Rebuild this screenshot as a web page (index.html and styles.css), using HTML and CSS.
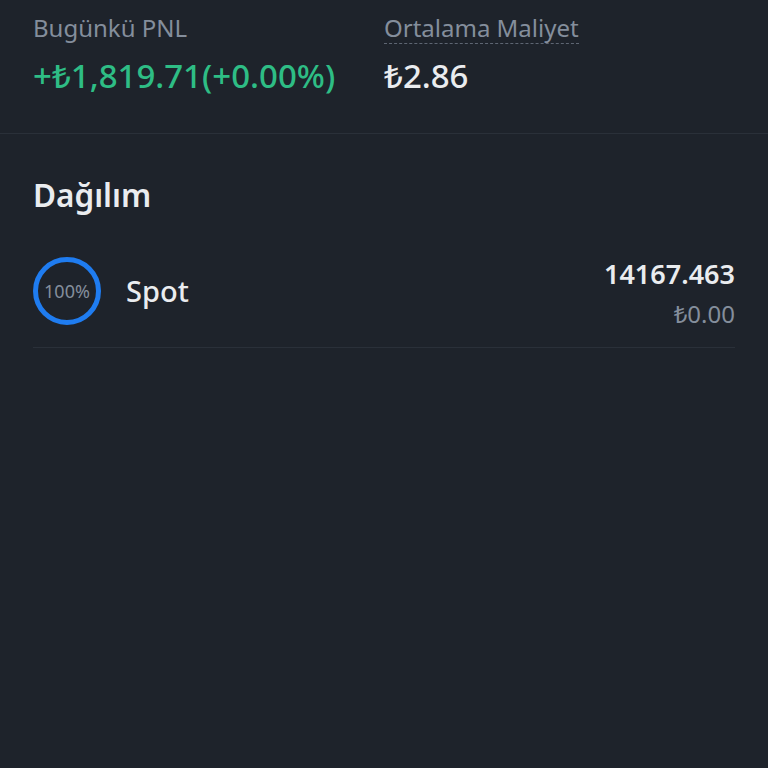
FILE: index.html
```html
<!DOCTYPE html>
<html lang="tr">
<head>
    <meta charset="UTF-8">
    <meta name="viewport" content="width=device-width, initial-scale=1.0">
    <title>Varlık Detayı</title>
    <link rel="stylesheet" href="styles.css">
</head>
<body>
    <div class="ozet">
        <div class="kolon">
            <div class="etiket">Bugünkü PNL</div>
            <div class="deger yesil">+₺1,819.71(+0.00%)</div>
        </div>
        <div class="kolon">
            <div class="etiket"><span class="noktali">Ortalama Maliyet</span></div>
            <div class="deger">₺2.86</div>
        </div>
    </div>

    <div class="dagilim">
        <h2>Dağılım</h2>
        <div class="satir">
            <div class="halka">
                <svg width="68" height="68" viewBox="0 0 68 68">
                    <circle cx="34" cy="34" r="31.5" fill="none" stroke="#1f7cf0" stroke-width="5"/>
                </svg>
                <span>100%</span>
            </div>
            <div class="ad">Spot</div>
            <div class="tutar">
                <div class="miktar">14167.463</div>
                <div class="karsilik">₺0.00</div>
            </div>
        </div>
    </div>
</body>
</html>
```

FILE: styles.css
```css
/* genel */
body {
    margin: 0;
    background-color: #1e232b;
    font-family: "Noto Sans", "DejaVu Sans", sans-serif;
    color: #eaecef;
}

/* ust ozet alani */
.ozet {
    display: flex;
    padding: 12px 33px 0 33px;
    height: 121px;
    border-bottom: 1px solid #2a3039;
}

.kolon {
    width: 352px;
}

.etiket {
    font-size: 24px;
    color: #848e9c;
    line-height: 32px;
    height: 32px;
}

.noktali {
    display: inline-block;
    height: 31px;
    border-bottom: 1px dashed #5e6673;
}

.deger {
    font-size: 33px;
    font-weight: 500;
    line-height: 40px;
    margin-top: 12px;
}

.yesil {
    color: #2ebd85;
}

/* dagilim */
.dagilim {
    padding: 0 33px;
}

.dagilim h2 {
    margin: 39px 0 18px 0;
    font-size: 31.5px;
    font-weight: 600;
    line-height: 44px;
}

.satir {
    display: flex;
    align-items: center;
    height: 112px;
    border-bottom: 1px solid #2a3039;
}

.halka {
    position: relative;
    width: 68px;
    height: 68px;
}

.halka svg {
    display: block;
}

.halka span {
    position: absolute;
    inset: 0;
    display: flex;
    align-items: center;
    justify-content: center;
    font-size: 18px;
    color: #848e9c;
}

.ad {
    flex: 1;
    margin-left: 25px;
    font-size: 29px;
    font-weight: 500;
    line-height: 40px;
}

.tutar {
    text-align: right;
    margin-top: 6px;
}

.miktar {
    font-size: 27px;
    font-weight: 600;
    line-height: 36px;
}

.karsilik {
    font-size: 24px;
    color: #848e9c;
    line-height: 36px;
    margin-top: 4px;
}
```
